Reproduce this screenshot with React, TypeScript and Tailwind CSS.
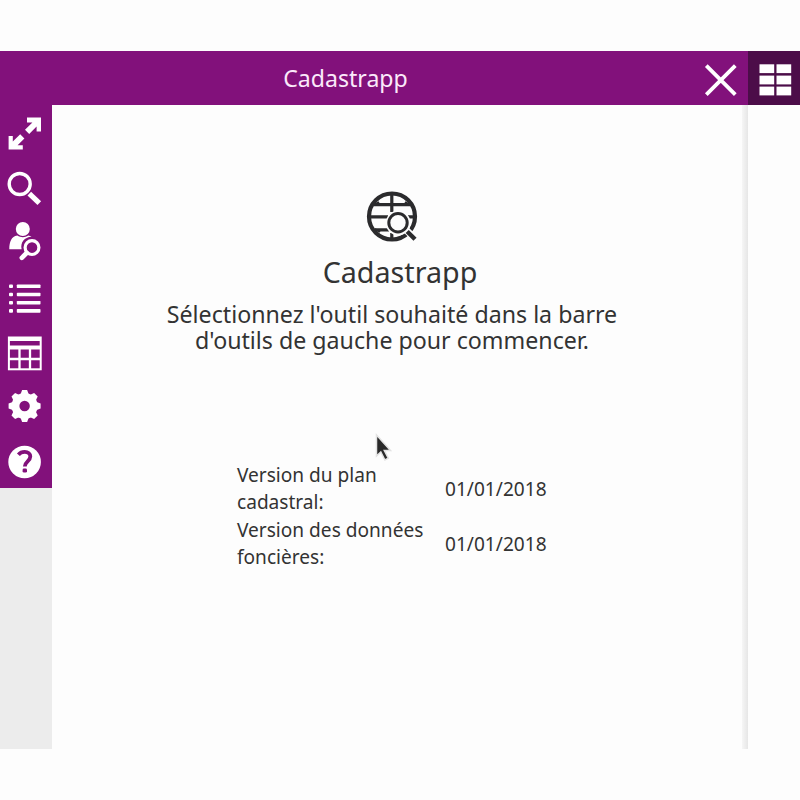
import type { ReactNode } from 'react';

function ToolButton({ label, children }: { label: string; children: ReactNode }) {
  return (
    <button aria-label={label} className="block h-[54.6px] w-[52px] shrink-0">
      <svg width="52" height="54" viewBox="0 0 52 54" fill="none" stroke="none" className="block">
        {children}
      </svg>
    </button>
  );
}

function Toolbar() {
  return (
    <nav className="flex h-[382.5px] flex-col bg-[#82117b] text-white">
      <ToolButton label="Agrandir">
        <path
          fill="white"
          d="M27 12.5H41V26.5H36.6V21.6L29.2 29L25 24.8L32.4 17.4H27zM20.2 29.2L24.4 33.4L17.6 40.2H22.8V44.5H8.6V31H12.8V36.6z"
        />
      </ToolButton>
      <ToolButton label="Recherche">
        <circle cx="19.7" cy="24" r="10.5" stroke="white" strokeWidth="3.4" />
        <path d="M29.3 33.6l10 9.6" stroke="white" strokeWidth="5.2" />
      </ToolButton>
      <ToolButton label="Recherche propriétaire">
        <circle cx="22.8" cy="15" r="7" fill="white" />
        <path fill="white" d="M9.3 35.2c0-7.4 2-12.8 8-13.8 3.6 2.3 7.6 2.3 11 0 1.2.2 2.3.7 3.2 1.4-7 .4-11.3 5.6-9.9 12.4z" />
        <circle cx="32" cy="33.6" r="6.9" stroke="white" strokeWidth="3.2" />
        <path d="M26.6 39l-4.8 4.8" stroke="white" strokeWidth="4.6" strokeLinecap="round" />
      </ToolButton>
      <ToolButton label="Liste">
        {[17.3, 25.5, 33.7, 41.9].map((y) => (
          <g key={y} fill="white">
            <rect x="9" y={y - 1.8} width="4" height="3.6" rx="1" />
            <rect x="16.8" y={y - 1.8} width="23.7" height="3.6" rx=".7" />
          </g>
        ))}
      </ToolButton>
      <ToolButton label="Tableau">
        <rect x="8.9" y="13.5" width="31.8" height="31.8" stroke="white" strokeWidth="2" />
        <path d="M9 15h31.5M9 23.6h31.5" stroke="white" strokeWidth="4" />
        <path d="M19.5 25v20M30 25v20M9 35h31.5" stroke="white" strokeWidth="2.3" />
      </ToolButton>
      <ToolButton label="Paramètres">
        <g transform="translate(24.6 28)">
          {[0, 45, 90, 135].map((angle) => (
            <path key={angle} d="M-4-12L-2.5-16H2.5L4-12V12L2.5 16H-2.5L-4 12z" fill="white" transform={`rotate(${angle})`} />
          ))}
          <circle r="13" fill="white" />
          <circle r="5.2" fill="#82117b" />
        </g>
      </ToolButton>
      <ToolButton label="Aide">
        <circle cx="24.6" cy="29" r="16.3" fill="white" />
        <path d="M18.4 21.7c1.6-1.9 3.7-2.8 6.3-2.8 3.4 0 5.6 1.8 5.6 4.6 0 4.7-5.5 4.9-5.5 10" stroke="#82117b" strokeWidth="3.8" />
        <rect x="22.6" y="35.6" width="4.4" height="4" rx="1.4" fill="#82117b" />
      </ToolButton>
    </nav>
  );
}

function GlobeSearchIcon() {
  return (
    <svg width="52" height="52" viewBox="0 0 52 52" fill="none" stroke="#2b2b2d" className="block">
      <circle cx="26" cy="25.5" r="23" strokeWidth="4.2" />
      <path d="M25.8 3v18M8 13.6h36M4 25.8h18M42 25.8h6M9 38.8h14M25.8 42v6" strokeWidth="3.2" />
      <path d="M8 14l5-3M44 14l-5-3M9 38l5 3" strokeWidth="2" />
      <circle cx="32.2" cy="32" r="12.4" fill="#fdfdfd" stroke="none" />
      <path d="M38 37l12.5 12" stroke="#fdfdfd" strokeWidth="7" />
      <circle cx="32" cy="31.8" r="9.2" strokeWidth="3" />
      <path d="M41.2 40.5l7.8 7.8" strokeWidth="4.4" />
    </svg>
  );
}

function VersionRow({ label, value }: { label: string; value: string }) {
  return (
    <div className="flex h-[54.6px] items-center">
      <dt className="w-[208px] pr-3">{label}</dt>
      <dd className="pt-px">{value}</dd>
    </div>
  );
}

export default function App() {
  return (
    <div className="relative flex h-[800px] w-[800px] flex-col overflow-hidden bg-[#fdfdfd] pt-[50.5px] font-['Noto_Sans',sans-serif] text-[#333333]">
      <header className="flex h-[54.5px] shrink-0 bg-[#82117b] text-white">
        <h1 className="w-[691px] pt-[11px] text-center text-[23.1px] leading-[32px] text-[#fbe9fa]">Cadastrapp</h1>
        <button aria-label="Fermer" className="w-[57px]">
          <svg width="57" height="54" viewBox="0 0 57 54" className="block">
            <path d="M15.3 14.7l29 29M44.3 14.7l-29 29" stroke="white" strokeWidth="3.8" />
          </svg>
        </button>
        <button aria-label="Menu" className="w-[52px] bg-[#4c0d49]">
          <svg width="52" height="54" viewBox="0 0 52 54" fill="white" className="block">
            {[13.3, 24.6, 35.6].map((y) => (
              <g key={y}>
                <rect x="11.5" y={y} width="14.7" height="8.8" />
                <rect x="28.5" y={y} width="14.7" height="8.8" />
              </g>
            ))}
          </svg>
        </button>
      </header>
      <div className="flex h-[644px] shrink-0">
        <aside className="w-[52px] bg-[#ececec]">
          <Toolbar />
        </aside>
        <main className="flex w-[680px] flex-col items-center pt-[86px]">
          <GlobeSearchIcon />
          <h2 className="mt-[13px] pl-4 text-[28.7px] leading-[32px]">Cadastrapp</h2>
          <p className="mt-[12.5px] w-[480px] text-center text-[23.2px] leading-[26.4px]">
            Sélectionnez l'outil souhaité dans la barre d'outils de gauche pour commencer.
          </p>
          <dl className="mt-[108.7px] w-[310px] text-[19.1px] leading-[27.3px]">
            <VersionRow label="Version du plan cadastral:" value="01/01/2018" />
            <VersionRow label="Version des données foncières:" value="01/01/2018" />
          </dl>
        </main>
        <div className="ml-[10px] w-[6px] bg-linear-to-r from-[#f6f6f6] to-[#e6e6e6]" />
      </div>
      <svg className="absolute top-[431px] left-[372px]" width="22" height="34" viewBox="0 0 22 34">
        <path
          d="M4.5 4v21l4.3-4.1 4.1 8.1 3.4-1.8-4-7.8h6.2z"
          fill="#292929"
          stroke="#e3e3e3"
          strokeWidth="1.5"
        />
      </svg>
    </div>
  );
}
